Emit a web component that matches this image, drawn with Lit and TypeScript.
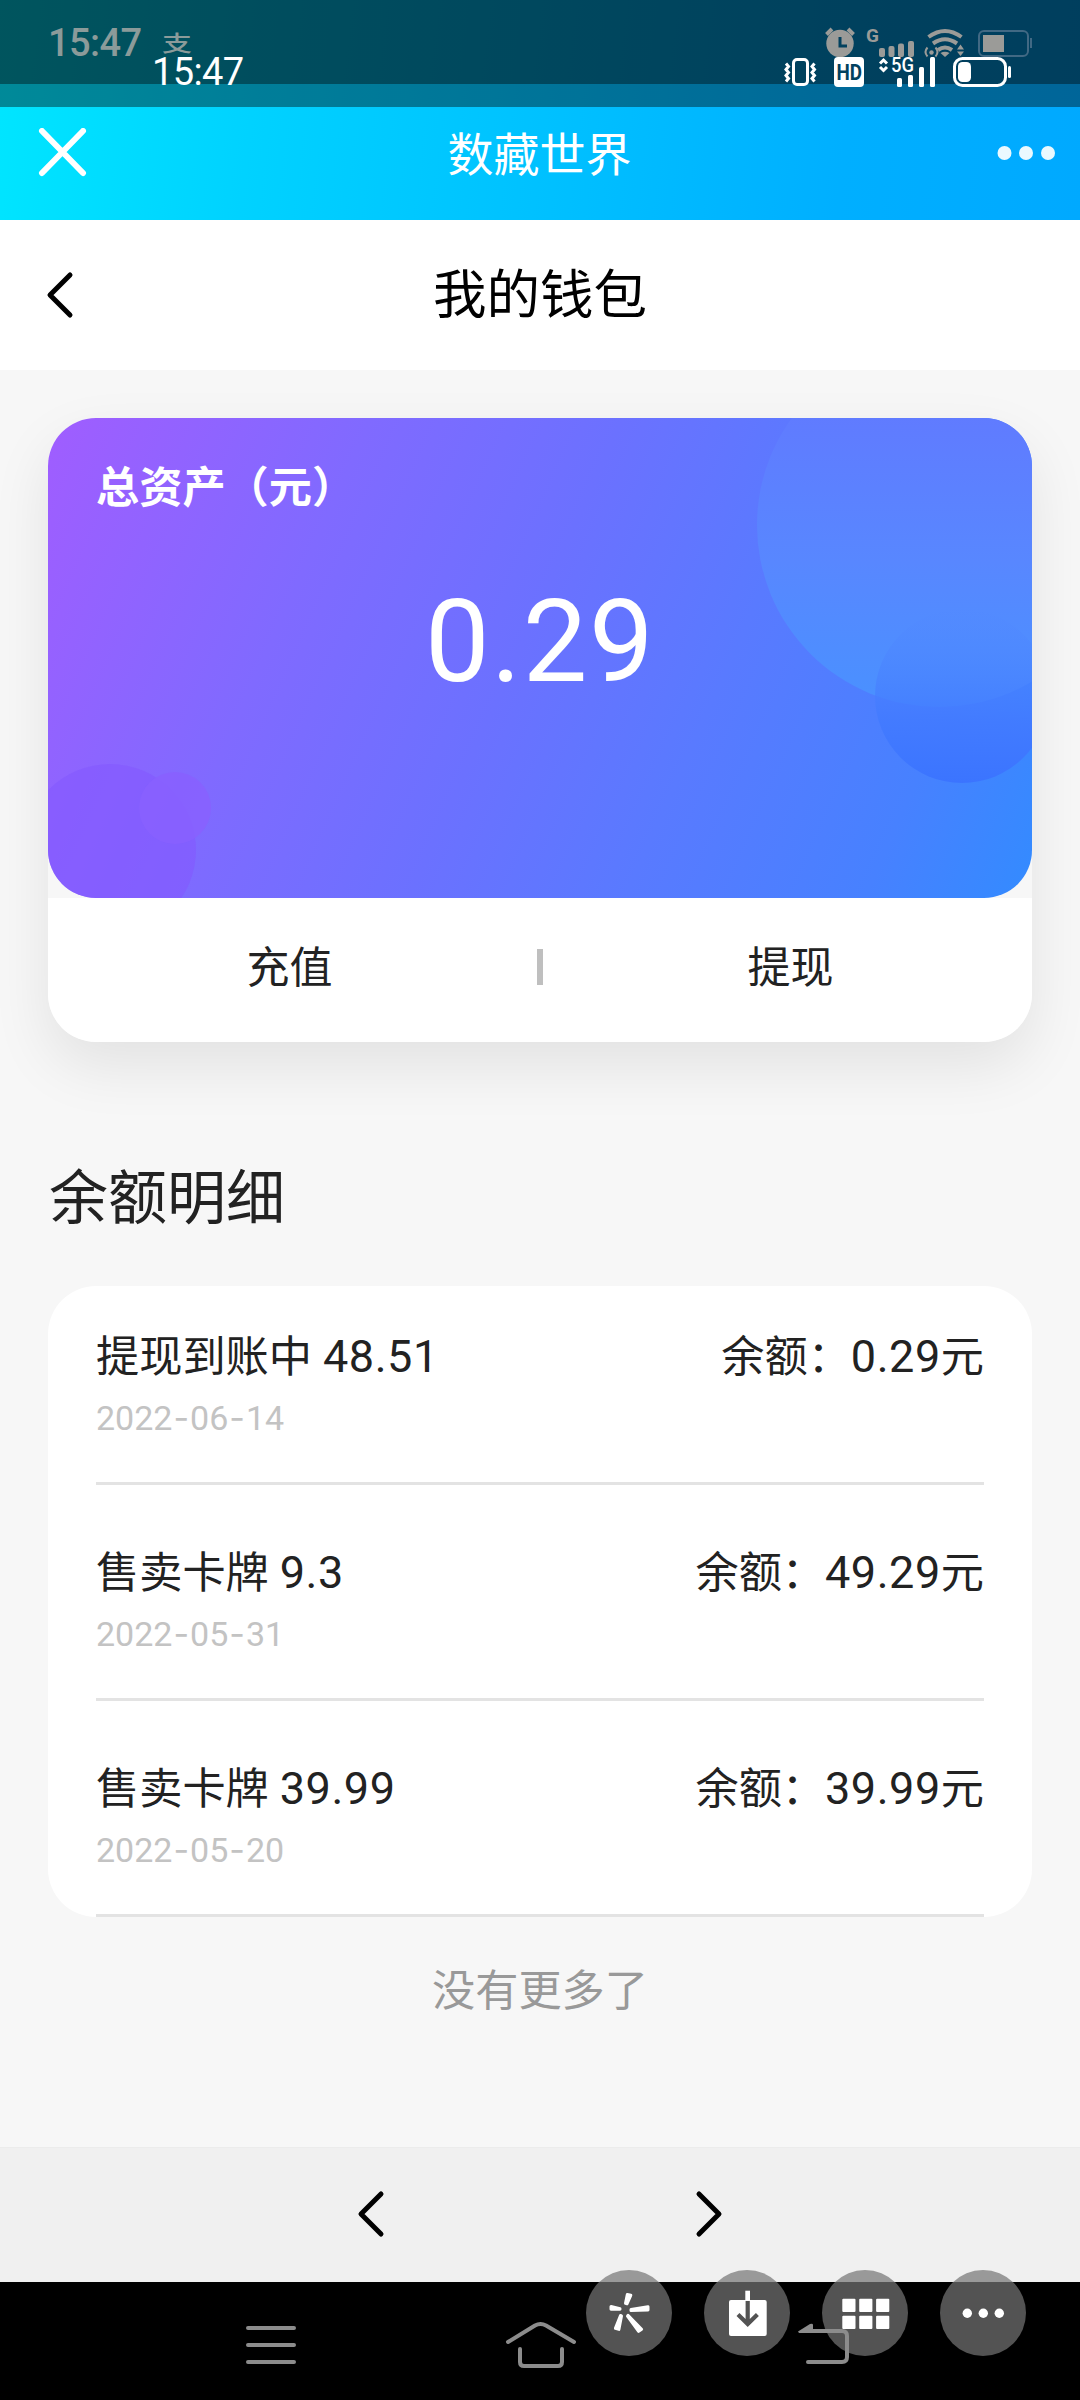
import { LitElement, html, css, svg } from "lit";
import { customElement, property } from "lit/decorators.js";

interface Entry {
  label: string;
  amount: string;
  date: string;
  balance: string;
}

const ENTRIES: Entry[] = [
  { label: "提现到账中", amount: "48.51", date: "2022-06-14", balance: "0.29" },
  { label: "售卖卡牌", amount: "9.3", date: "2022-05-31", balance: "49.29" },
  { label: "售卖卡牌", amount: "39.99", date: "2022-05-20", balance: "39.99" },
];

/* System status bar: two layers of indicators, one dimmed behind the other. */
@customElement("status-bar")
export class StatusBar extends LitElement {
  static styles = css`
    :host {
      display: block;
      position: relative;
      height: 107px;
      background: linear-gradient(rgba(0, 0, 0, 0.63) 0 84px, rgba(0, 0, 0, 0.4) 84px);
    }
    .icons {
      display: block;
    }
    .clock {
      font-family: Roboto, sans-serif;
      font-size: 38px;
    }
    .dim {
      fill: #8b9b9a;
      font-weight: 500;
    }
    .bright {
      fill: #fff;
    }
    .pay {
      font: 500 22px "Noto Sans CJK SC", sans-serif;
      fill: #8b9b9a;
    }
    .tag {
      font-family: Roboto, sans-serif;
    }
  `;

  render() {
    return html`
      <svg class="icons" width="1080" height="107" viewBox="0 0 1080 107">
        <text class="clock dim" x="48" y="56" textLength="94">15:47</text>
        <text class="pay" x="162" y="50.500" textLength="30" lengthAdjust="spacingAndGlyphs">支</text>
        ${svg`
        <g fill="#9b9b98">
          <circle cx="840" cy="43.500" r="13.700"/>
          <path d="M840 37v9h7" fill="none" stroke="#02415e" stroke-width="3"/>
          <path d="M826.500 34.500l5.500-5.500M853.500 34.500l-5.500-5.500" stroke="#9b9b98" stroke-width="4"/>
          <text class="tag" x="866" y="41.500" font-size="19" font-weight="700">G</text>
          <rect x="879" y="48" width="6" height="9" rx="2"/>
          <rect x="888.500" y="46" width="6" height="11" rx="2"/>
          <rect x="898" y="43.500" width="6" height="13.500" rx="2"/>
          <rect x="908" y="41" width="6" height="16" rx="2"/>
          <g fill="none" stroke="#9b9b98" stroke-width="4">
            <path d="M928.500 37q16.500-12 33 0"/>
            <path d="M933 43.500q12-8.500 24 0"/>
            <path d="M938 50q7-5 14 0"/>
          </g>
          <path d="M940.500 53q4.500-2.500 9 0l-4.500 4z"/>
          <circle cx="931.500" cy="52.500" r="2.200"/>
          <path d="M927.500 47.500q-4 4.500 0 9M935.500 47.500q4 4.500 0 9" fill="none" stroke="#9b9b98" stroke-width="2"/>
          <path d="M957 49.500l3.500-5 3.500 5zM957 51.500l3.500 4.500 3.500-4.500z"/>
          <rect x="983" y="35" width="21" height="17"/>
        </g>
        <rect x="979" y="31" width="49" height="25" rx="5" fill="none" stroke="#416984" stroke-width="2"/>
        <rect x="1030" y="38" width="2" height="10" fill="#416984"/>
        <g fill="none" stroke="#fff" stroke-width="3">
          <rect x="793.500" y="59.500" width="14" height="25" rx="3.500"/>
          <path d="M786 63.500l2.500 3-2.500 3 2.500 3-2.500 3 2.500 3-2.500 3M814.500 63.500l-2.500 3 2.500 3-2.500 3 2.500 3-2.500 3 2.500 3"/>
          <path d="M880 63.500l3.500-3.500 3.500 3.500M880 67l3.500 3.500 3.500-3.500"/>
          <rect x="954.500" y="58.500" width="51" height="27" rx="8"/>
        </g>
        <g fill="#fff">
          <rect x="834" y="57" width="30" height="30" rx="4"/>
          <text class="tag" x="891" y="71.500" font-size="20" font-weight="500" textLength="23" lengthAdjust="spacingAndGlyphs">5G</text>
          <rect x="897" y="78" width="5" height="9" rx="1.500"/>
          <rect x="908" y="75" width="5" height="12" rx="1.500"/>
          <rect x="919" y="67" width="5" height="20" rx="1.500"/>
          <rect x="930" y="57" width="5" height="30" rx="1.500"/>
          <rect x="958" y="62" width="13" height="20" rx="4.500"/>
          <rect x="1008" y="66" width="3" height="12" rx="1.500"/>
        </g>
        <text class="tag" x="836.500" y="80" font-size="22" font-weight="700" fill="#02415e" textLength="25.500" lengthAdjust="spacingAndGlyphs">HD</text>
        `}
        <text class="clock bright" x="152" y="85" textLength="92">15:47</text>
      </svg>
    `;
  }
}

/* Card with the total balance and the two wallet actions. */
@customElement("asset-card")
export class AssetCard extends LitElement {
  @property() amount = "";

  static styles = css`
    :host {
      display: block;
      border-radius: 48px;
      box-shadow: 0 24px 60px rgba(0, 0, 0, 0.085);
    }
    .panel {
      position: relative;
      display: flex;
      flex-direction: column;
      height: 480px;
      box-sizing: border-box;
      padding: 35px 48px 0;
      border-radius: 48px;
      overflow: hidden;
      color: #fff;
      background: linear-gradient(114deg, #a05dff 0%, #806aff 27%, #6b71ff 48%, #597aff 66%, #4781ff 86%, #338bff 100%);
    }
    .bubbles {
      position: absolute;
      inset: 0;
    }
    .caption {
      position: relative;
      font-size: 43.200px;
      line-height: 62px;
      font-weight: 700;
    }
    .amount {
      position: relative;
      margin-top: 57px;
      font-family: Roboto, sans-serif;
      font-size: 115px;
      line-height: 140px;
      text-align: center;
      letter-spacing: 1.500px;
    }
    .actions {
      display: flex;
      align-items: center;
      height: 144px;
      padding-bottom: 6px;
      box-sizing: border-box;
      background: #fff;
      border-radius: 0 0 48px 48px;
    }
    .action {
      flex: 1;
      text-align: center;
      font-size: 43px;
      line-height: 60px;
      padding-bottom: 6px;
    }
    .action:first-child {
      padding-right: 6px;
    }
    .action:last-child {
      padding-left: 6px;
    }
    .bar {
      width: 6px;
      height: 36px;
      background: #bfbfbf;
    }
  `;

  render() {
    return html`
      <div class="panel">
        <svg class="bubbles" width="984" height="480" viewBox="0 0 984 480">
          <defs>
            <linearGradient id="sky" x1="0" y1="0" x2="0" y2="1">
              <stop offset="0.2" stop-color="#607bff" />
              <stop offset="0.6" stop-color="#5887ff" />
              <stop offset="1" stop-color="#4991ff" />
            </linearGradient>
            <linearGradient id="deep" x1="0" y1="0" x2="0" y2="1">
              <stop offset="0" stop-color="#5288ff" stop-opacity="0.1" />
              <stop offset="0.65" stop-color="#427aff" stop-opacity="0.9" />
              <stop offset="1" stop-color="#3b74ff" />
            </linearGradient>
          </defs>
          <circle cx="891" cy="107" r="182" fill="url(#sky)" />
          <circle cx="914" cy="278" r="87" fill="url(#deep)" />
          <circle cx="62" cy="432" r="86" fill="#8459ff" fill-opacity="0.6" />
          <circle cx="127" cy="390" r="36" fill="#8860ff" fill-opacity="0.85" />
        </svg>
        <div class="caption">总资产（元）</div>
        <div class="amount">${this.amount}</div>
      </div>
      <div class="actions">
        <div class="action">充值</div>
        <div class="bar"></div>
        <div class="action">提现</div>
      </div>
    `;
  }
}

/* One line of the balance history. */
@customElement("entry-row")
export class EntryRow extends LitElement {
  @property({ attribute: false }) entry!: Entry;

  static styles = css`
    :host {
      display: block;
      height: 216px;
      box-sizing: border-box;
      padding-top: 53px;
      border-bottom: 3px solid #e3e3e3;
    }
    .line {
      display: flex;
      justify-content: space-between;
      height: 62px;
      line-height: 62px;
      font-size: 43.200px;
      color: #222;
      white-space: nowrap;
    }
    .num {
      font-family: Roboto, sans-serif;
      font-size: 45px;
      letter-spacing: 0.550px;
    }
    .gap {
      margin-left: 11px;
    }
    .date {
      margin-top: 12px;
      font-family: Roboto, sans-serif;
      font-size: 34px;
      line-height: 44px;
      color: #c3c3c3;
    }
    .dash {
      font-family: Inter, sans-serif;
      font-weight: 400;
      margin: 0 1px;
    }
  `;

  render() {
    const e = this.entry;
    const [y, m, d] = e.date.split("-");
    return html`
      <div class="line">
        <span>${e.label}<span class="num gap">${e.amount}</span></span>
        <span>余额：<span class="num">${e.balance}</span>元</span>
      </div>
      <div class="date">${y}<span class="dash">-</span>${m}<span class="dash">-</span>${d}</div>
    `;
  }
}

@customElement("app-root")
export class AppRoot extends LitElement {
  static styles = css`
    :host {
      display: flex;
      flex-direction: column;
      position: relative;
      width: 1080px;
      height: 2400px;
      overflow: hidden;
      background: #f7f7f7;
      color: #222;
      font-family: "Noto Sans CJK SC", sans-serif;
    }
    .top {
      height: 220px;
      background: linear-gradient(97deg, #00e6ff 0%, #00d2ff 24%, #00c0ff 52%, #00afff 78%, #00a9ff 100%);
    }
    .appbar {
      display: flex;
      align-items: center;
      justify-content: space-between;
      height: 113px;
      padding: 0 24px 21px 38px;
      box-sizing: border-box;
      color: #fff;
    }
    .side {
      width: 60px;
      display: flex;
    }
    .apptitle {
      font-size: 46px;
      line-height: 60px;
      margin-right: 15px;
      padding-bottom: 5px;
    }
    .header {
      display: grid;
      grid-template-columns: 200px 1fr 200px;
      align-items: center;
      height: 150px;
      box-sizing: border-box;
      padding-bottom: 4px;
      background: #fff;
      color: #000;
    }
    .back {
      display: block;
      margin: 3px 0 0 46px;
    }
    .title {
      text-align: center;
      font-size: 53.500px;
      line-height: 72px;
      padding-bottom: 5px;
    }
    .body {
      flex: 1;
      padding: 48px 48px 0;
    }
    .heading {
      margin: 112px 0 52px 1px;
      font-size: 59px;
      line-height: 80px;
      font-weight: 400;
    }
    .list {
      height: 631px;
      box-sizing: border-box;
      padding: 0 48px;
      border-radius: 48px;
      background: #fff;
      display: flex;
      flex-direction: column;
      justify-content: flex-end;
    }
    .list entry-row {
      flex: none;
    }
    .end {
      margin-top: 38px;
      text-align: center;
      font-size: 43.200px;
      line-height: 64px;
      color: #999;
    }
    .pager {
      display: flex;
      justify-content: center;
      gap: 310px;
      height: 135px;
      padding-top: 42px;
      box-sizing: border-box;
      background: #f0f0f0;
      border-top: 1px solid #ececec;
    }
    .nav {
      height: 118px;
      background: #000;
    }
    .float {
      position: absolute;
      left: 586px;
      top: 2270px;
      display: flex;
      gap: 32px;
    }
    .round {
      width: 86px;
      height: 86px;
      border-radius: 50%;
      background: rgba(117, 117, 117, 0.71);
    }
    .keys {
      position: absolute;
      left: 0;
      top: 2282px;
    }
  `;

  private chevron(path: string, cls = "") {
    return html`<svg class=${cls} width="28" height="48" viewBox="0 0 28 48">
      <path d=${path} fill="none" stroke="#000" stroke-width="5" stroke-linecap="round" stroke-linejoin="round" />
    </svg>`;
  }

  render() {
    return html`
      <div class="top">
        <status-bar></status-bar>
        <div class="appbar">
          <div class="side">
            <svg width="50" height="50" viewBox="0 0 50 50">
              <path d="M4 3l41 42M45 3L4 45" stroke="#fff" stroke-width="6" stroke-linecap="round" />
            </svg>
          </div>
          <div class="apptitle">数藏世界</div>
          <div class="side">
            <svg width="60" height="16" viewBox="0 0 60 16" fill="#eaf9ff">
              <circle cx="8.500" cy="8" r="7" />
              <circle cx="30" cy="8" r="7" />
              <circle cx="52" cy="8" r="7" />
            </svg>
          </div>
        </div>
      </div>
      <div class="header">
        ${this.chevron("M24 4L4 24L24 44", "back")}
        <div class="title">我的钱包</div>
      </div>
      <div class="body">
        <asset-card amount="0.29"></asset-card>
        <h2 class="heading">余额明细</h2>
        <div class="list">${ENTRIES.map((e) => html`<entry-row .entry=${e}></entry-row>`)}</div>
        <div class="end">没有更多了</div>
      </div>
      <div class="pager">
        ${this.chevron("M24 4L4 24L24 44")} ${this.chevron("M4 4L24 24L4 44")}
      </div>
      <div class="nav"></div>
      <div class="float">
        <svg class="round" viewBox="0 0 86 86" fill="#fff" stroke="#fff" stroke-width="3" stroke-linejoin="round">
          <path d="M41.300 24.500l3.500.8-3.800 8.500-1.500-.4z" />
          <path d="M62 36.700v3.300l-17 .6v-1z" />
          <path d="M25 36.500l9 2.200v.5l-9 .1z" />
          <path d="M34.500 45.500l1 .4-2.600 13.500-3.500-1z" />
          <path d="M42 45.300l13.600 13.900-3 2.200L41.500 46z" />
        </svg>
        <svg class="round" viewBox="0 0 86 86">
          <rect x="25" y="30" width="37.700" height="36" rx="2" fill="#fff" />
          <rect x="41.300" y="20.700" width="4.700" height="10" fill="#fff" />
          <path d="M43.700 31v23M34 44.500l9.700 9.500 9.700-9.500" fill="none" stroke="#535353" stroke-width="4.200" />
        </svg>
        <svg class="round" viewBox="0 0 86 86" fill="#fff">
          ${[20.3, 37.2, 54.1].map((x) =>
            [28.7, 45.8].map((y) => svg`<rect x=${x} y=${y} width="13.200" height="13.200" rx="1"/>`)
          )}
        </svg>
        <svg class="round" viewBox="0 0 86 86" fill="#fff">
          <circle cx="27.300" cy="43.300" r="4.700" />
          <circle cx="43.300" cy="43.300" r="4.700" />
          <circle cx="59.300" cy="43.300" r="4.700" />
        </svg>
      </div>
      <svg class="keys" width="1080" height="118" viewBox="0 0 1080 118">
        <g fill="none" stroke="#8c8c8c" stroke-width="4" stroke-linecap="round" stroke-linejoin="round">
          <path d="M248 46h46M248 63h46M248 80h46" />
          <path d="M508 60l27-16.500q5.500-3 11 0l28 16.500" />
          <path d="M520 67v13q0 4 4 4h34q4 0 4-4v-13" />
          <path d="M808 80h34q5 0 5-5v-21q0-5-5-5h-36" />
        </g>
        <path d="M798 49.500l12-7.500q3-1 3 1v8l-14 0z" fill="#8c8c8c" />
      </svg>
    `;
  }
}
